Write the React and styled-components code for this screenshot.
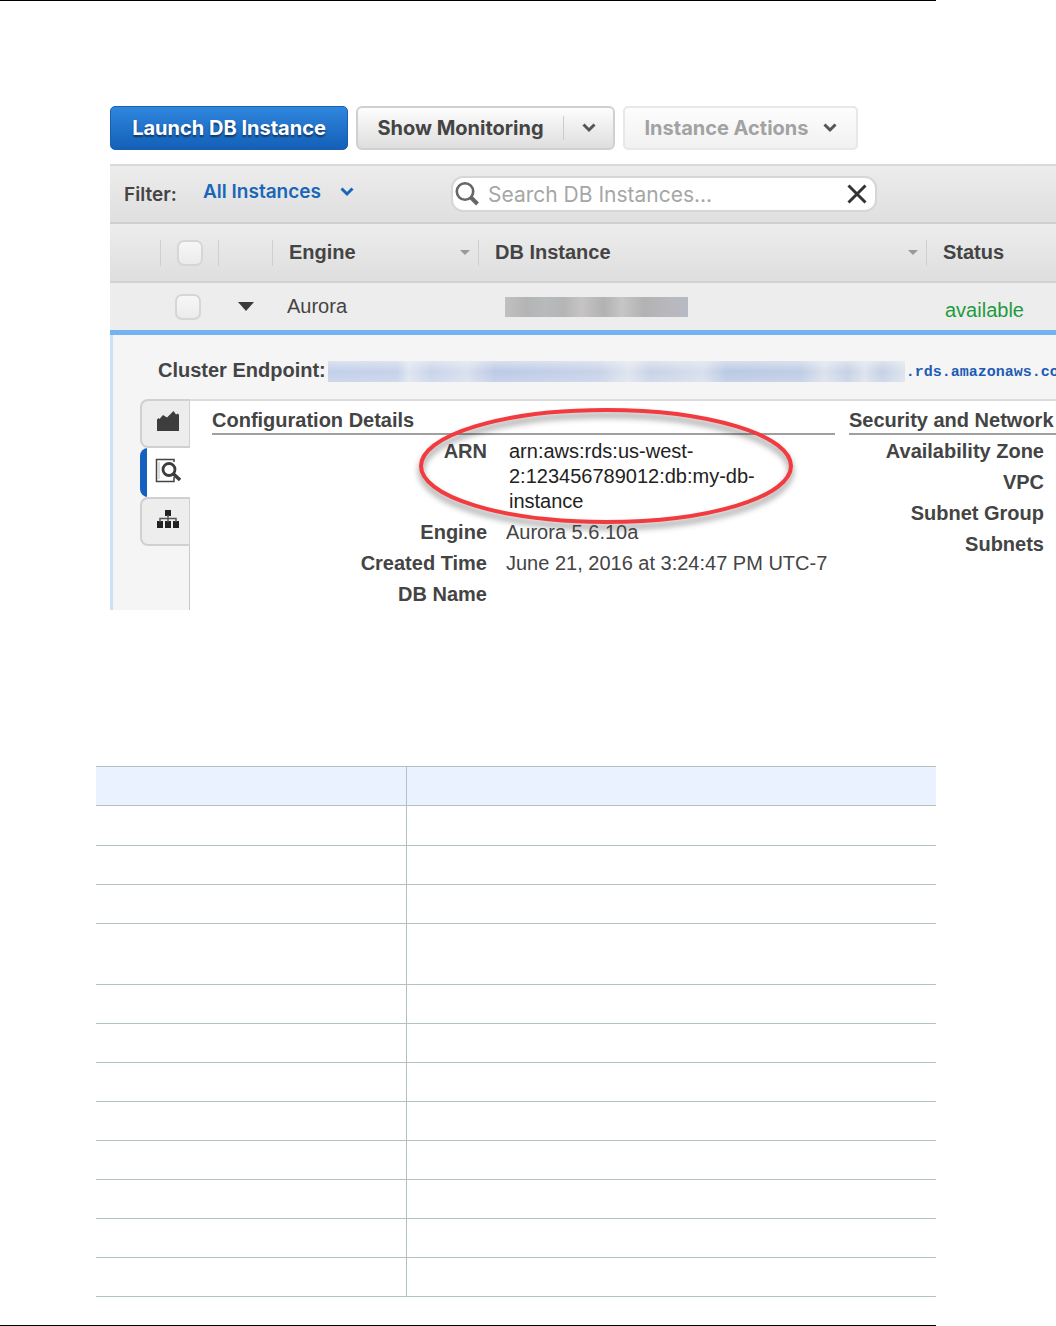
import React, { useState } from 'react';
import styled, { createGlobalStyle, css } from 'styled-components';

const rowHeights = [40, 39, 39, 61, 39, 39, 39, 39, 39, 39, 39, 39];

const configuration = [
  { label: 'ARN', value: 'arn:aws:rds:us-west-2:123456789012:db:my-db-instance', circled: true },
  { label: 'Engine', value: 'Aurora 5.6.10a' },
  { label: 'Created Time', value: 'June 21, 2016 at 3:24:47 PM UTC-7' },
  { label: 'DB Name', value: '' },
];

const network = ['Availability Zone', 'VPC', 'Subnet Group', 'Subnets'];

function Chevron({ color = '#555' }) {
  return (
    <svg width="14" height="10" viewBox="0 0 14 10" fill="none" aria-hidden="true">
      <path d="M1.5 1.5 L7 7 L12.5 1.5" stroke={color} strokeWidth="3" />
    </svg>
  );
}

function ChartIcon() {
  return (
    <svg width="22" height="20" viewBox="0 0 22 20" aria-hidden="true">
      <path d="M0 8.5 L1.5 7 L2.5 8 L6 4 L10 6.5 L16.5 0 L19 3.5 L21 2.5 L22 4 V20 H0 Z" fill="#3d3d3d" />
    </svg>
  );
}

function DetailsIcon() {
  return (
    <svg width="26" height="25" viewBox="0 0 26 25" fill="none" aria-hidden="true">
      <path d="M19 4 V1.5 H1.5 V23.5 H19 V19" stroke="#444" strokeWidth="1.5" />
      <path d="M4 4 V21" stroke="#bbb" strokeWidth="1" />
      <circle cx="14" cy="11.5" r="6" stroke="#3d3d3d" strokeWidth="2.8" />
      <path d="M18 15.5 L25 22" stroke="#3d3d3d" strokeWidth="3.4" />
    </svg>
  );
}

function SitemapIcon() {
  return (
    <svg width="22" height="18" viewBox="0 0 22 18" aria-hidden="true">
      <path d="M8 0h6v6h-6z M0 11h6v7h-6z M8 11h6v7h-6z M16 11h6v7h-6z" fill="#222" />
      <path d="M11 5 V12 M3 12 V8.5 H19 V12" stroke="#555" strokeWidth="1.5" fill="none" />
    </svg>
  );
}

const tabs = [
  { id: 'monitoring', title: 'Monitoring', Icon: ChartIcon },
  { id: 'details', title: 'Details', Icon: DetailsIcon },
  { id: 'topology', title: 'Topology', Icon: SitemapIcon },
];

function Console() {
  const [search, setSearch] = useState('');
  const [tab, setTab] = useState('details');

  return (
    <ConsoleFrame>
      <Toolbar>
        <PrimaryButton>Launch DB Instance</PrimaryButton>
        <SplitButton>
          <SplitMain>Show Monitoring</SplitMain>
          <SplitToggle aria-label="Monitoring options"><Chevron /></SplitToggle>
        </SplitButton>
        <ActionsButton disabled>
          Instance Actions
          <Chevron />
        </ActionsButton>
      </Toolbar>

      <FilterBar>
        <FilterLabel htmlFor="filter">Filter:</FilterLabel>
        <FilterPicker>
          <select id="filter">
            <option>All Instances</option>
          </select>
          <Chevron color="#1a66b8" />
        </FilterPicker>
        <SearchBox>
          <svg width="26" height="26" viewBox="0 0 26 26" fill="none" aria-hidden="true">
            <circle cx="10" cy="10.5" r="8.2" stroke="#666" strokeWidth="2.6" />
            <path d="M15.5 16 L22.5 23" stroke="#666" strokeWidth="4" />
          </svg>
          <input
            aria-label="Search DB Instances"
            placeholder="Search DB Instances..."
            value={search}
            onChange={(e) => setSearch(e.target.value)}
          />
          <button aria-label="Clear search" onClick={() => setSearch('')}>
            <svg width="20" height="20" viewBox="0 0 20 20" fill="none" aria-hidden="true">
              <path d="M1.5 1.5 L18.5 18.5 M18.5 1.5 L1.5 18.5" stroke="#333" strokeWidth="3" />
            </svg>
          </button>
        </SearchBox>
      </FilterBar>

      <InstanceTable>
        <colgroup>
          <Col $width={51} />
          <Col $width={58} />
          <Col $width={54} />
          <Col $width={206} />
          <Col />
          <Col $width={129} />
        </colgroup>
        <thead>
          <tr>
            <th><HeadCell /></th>
            <th><HeadCell><CheckBox type="checkbox" aria-label="Select all" /></HeadCell></th>
            <th><HeadCell /></th>
            <th><HeadCell>Engine<SortArrow /></HeadCell></th>
            <th><HeadCell>DB Instance<SortArrow /></HeadCell></th>
            <th><HeadCell $last>Status</HeadCell></th>
          </tr>
        </thead>
        <tbody>
          <tr>
            <td />
            <td><BodyCell><CheckBox type="checkbox" aria-label="Select instance" /></BodyCell></td>
            <td>
              <BodyCell>
                <ExpandButton aria-label="Collapse row">
                  <svg width="16" height="9" viewBox="0 0 16 9" aria-hidden="true">
                    <path d="M0 0 H16 L8 9 Z" fill="#3a3a3a" />
                  </svg>
                </ExpandButton>
              </BodyCell>
            </td>
            <td><BodyCell>Aurora</BodyCell></td>
            <td><HiddenName /></td>
            <td><Available>available</Available></td>
          </tr>
        </tbody>
      </InstanceTable>

      <Expanded>
        <Endpoint>
          <b>Cluster Endpoint:</b>
          <HiddenHost />
          <a href="#endpoint">.rds.amazonaws.co</a>
        </Endpoint>
        <DetailArea>
          <TabList>
            {tabs.map(({ id, title, Icon }) => (
              <Tab key={id} $active={tab === id} aria-label={title} onClick={() => setTab(id)}>
                <Icon />
              </Tab>
            ))}
          </TabList>
          <Panel>
            <Section $grow>
              <h3>Configuration Details</h3>
              {configuration.map((item) => (
                <Field key={item.label}>
                  <Label $width={275}>{item.label}</Label>
                  <Value $circled={item.circled}>{item.value}</Value>
                  {item.circled && (
                    <Circle viewBox="0 0 390 140" aria-hidden="true">
                      <ellipse cx="195" cy="66" rx="185" ry="56" />
                    </Circle>
                  )}
                </Field>
              ))}
            </Section>
            <Section>
              <h3>Security and Network</h3>
              {network.map((label) => (
                <Field key={label}>
                  <Label $width={195}>{label}</Label>
                </Field>
              ))}
            </Section>
          </Panel>
        </DetailArea>
      </Expanded>
    </ConsoleFrame>
  );
}

function App() {
  return (
    <Page>
      <GlobalStyle />
      <Rule />
      <Console />
      <FormatTable>
        <thead>
          <tr>
            <th />
            <th />
          </tr>
        </thead>
        <tbody>
          {rowHeights.map((height, i) => (
            <FormatRow key={i} $height={height}>
              <td />
              <td />
            </FormatRow>
          ))}
        </tbody>
      </FormatTable>
      <Rule />
    </Page>
  );
}

const GlobalStyle = createGlobalStyle`
  * {
    box-sizing: border-box;
  }

  body {
    margin: 0;
    background: #fff;
    color: #444;
    font-family: "Liberation Sans", Arial, sans-serif;
    font-size: 20px;
    line-height: 25px;
  }

  button, input, select {
    margin: 0;
    padding: 0;
    border: none;
    background: none;
    color: inherit;
    font: inherit;
  }
`

const Page = styled.main`
  overflow: hidden;
`

const Rule = styled.hr`
  height: 1px;
  margin: 0 120px 0 0;
  border: none;
  background: #000;
`

const ConsoleFrame = styled.section`
  margin: 105px 0 156px 110px;
`

const Toolbar = styled.div`
  display: flex;
  gap: 8px;
  height: 44px;
  margin-bottom: 14px;
  font-family: Inter, sans-serif;
  font-weight: 700;
`

const PrimaryButton = styled.button`
  width: 238px;
  border: 1px solid #1a60b0;
  border-radius: 5px;
  background: linear-gradient(#3086dd, #1360b8);
  color: #fff;
  text-shadow: 0 2px 2px rgba(0, 0, 0, 0.5);
`

const SplitButton = styled.div`
  display: flex;
  align-items: center;
  width: 259px;
  border: 2px solid #d0d0d0;
  border-radius: 6px;
  background: linear-gradient(#fdfdfd, #dedede);
`

const SplitMain = styled.button`
  flex: 1;
`

const SplitToggle = styled.button`
  display: flex;
  align-items: center;
  justify-content: center;
  width: 50px;
  height: 24px;
  border-left: 1px solid #ccc;
`

const ActionsButton = styled.button`
  display: flex;
  align-items: center;
  justify-content: center;
  gap: 14px;
  width: 235px;
  border: 2px solid #e8e8e8;
  border-radius: 5px;
  background: linear-gradient(#fdfdfd, #f1f1f1);
  color: #a2a2a2;
`

const FilterBar = styled.div`
  display: flex;
  align-items: center;
  height: 60px;
  padding-left: 14px;
  border-top: 2px solid #dadada;
  border-bottom: 2px solid #cfcfcf;
  background: linear-gradient(#ececec, #dfdfdf);
  font-family: Inter, sans-serif;
  font-size: 19px;
`

const FilterLabel = styled.label`
  width: 79px;
  font-weight: 600;
`

const FilterPicker = styled.div`
  display: flex;
  align-items: center;
  width: 248px;
  padding-bottom: 5px;
  color: #1a66b8;

  select {
    appearance: none;
    width: 137px;
    font-weight: 600;
  }
`

const SearchBox = styled.div`
  display: flex;
  align-items: center;
  flex: 0 1 426px;
  height: 36px;
  padding: 0 8px 0 2px;
  border: 2px solid #d6d6d6;
  border-radius: 12px;
  background: #fff;

  input {
    flex: 1;
    min-width: 0;
    padding-left: 7px;
    outline: none;
    font-size: 21px;
  }

  input::placeholder {
    color: #a6a6a6;
  }

  button {
    display: flex;
  }
`

const InstanceTable = styled.table`
  width: 100%;
  table-layout: fixed;
  border-collapse: separate;
  border-spacing: 0;

  th, td {
    padding: 0;
    text-align: left;
  }

  th {
    height: 59px;
    border-bottom: 2px solid #d2d2d2;
    background: linear-gradient(#ededed, #dedede);
  }

  td {
    height: 47px;
    background: #ededed;
  }
`

const Col = styled.col`
  ${({ $width }) => $width && css`width: ${$width}px;`}
`

const HeadCell = styled.div`
  display: flex;
  align-items: center;
  height: 26px;
  padding: 0 8px 0 16px;
  ${({ $last }) => !$last && css`
    border-right: 1px solid #cfcfcf;
    box-shadow: 1px 0 #f6f6f6;
  `}
`

const BodyCell = styled.div`
  display: flex;
  align-items: center;
  padding-left: 14px;
`

const SortArrow = styled.span`
  margin-left: auto;
  border: 5px solid transparent;
  border-top-color: #999;
  border-bottom: none;
`

const CheckBox = styled.input`
  appearance: none;
  flex: none;
  width: 26px;
  height: 26px;
  border: 2px solid #d6d6d6;
  border-radius: 7px;
  background: linear-gradient(#f7f7f7, #ebebeb);
`

const ExpandButton = styled.button`
  display: flex;
  padding-left: 5px;
`

const HiddenName = styled.div`
  width: 183px;
  height: 20px;
  margin-left: 26px;
  background: linear-gradient(90deg, #c0c0c0, #b4b4b5 12%, #b7bbbc 22%, #b5b5b6 32%, #c6c4c4 42%, #b2b2b3 54%, #c6c6c6 64%, #b2b2b4 76%, #b9b7bb 88%, #b7bac4);
`

const Available = styled.div`
  padding: 8px 0 0 18px;
  color: #1f9a3d;
`

const Expanded = styled.div`
  border-top: 5px solid #76b2f2;
  background: #f5f5f5;
`

const Endpoint = styled.div`
  display: flex;
  align-items: center;
  height: 64px;
  padding: 6px 0 0 45px;
  overflow: hidden;
  border-left: 3px solid #c9e1fa;
  white-space: nowrap;

  a {
    padding-top: 4px;
    color: #1d5bb5;
    font: bold 15px "Liberation Mono", monospace;
    text-decoration: none;
  }
`

const HiddenHost = styled.span`
  flex: none;
  width: 577px;
  height: 21px;
  margin: 2px 1px 0 2px;
  background:
    linear-gradient(rgba(245, 245, 245, 0.5), transparent 50%, rgba(245, 245, 245, 0.2)),
    linear-gradient(90deg, #c3d0ea, #c6d2e9 12%, #dfe5f0 14%, #c8d4ea 18%, #d9e0ee 24%, #bccae6 29%, #c8d3e9 47%, #dfe5ef 52%, #c8d3e8 56%, #d8dfed 65%, #bac9e4 69%, #bfcde5 82%, #dbe2ed 86%, #c6d1e6 90%, #dde3ed 93%, #c5d1e6 96%, #dde4ee);
`

const DetailArea = styled.div`
  display: flex;
  padding-left: 27px;
  border-left: 3px solid #c9e1fa;
`

const TabList = styled.div`
  display: flex;
  flex-direction: column;
  flex: none;
  width: 50px;

  &::after {
    content: "";
    flex: 1;
    border-right: 1px solid #c8c8c8;
  }
`

const Tab = styled.button`
  display: flex;
  align-items: center;
  justify-content: center;
  height: 49px;
  padding: 0 0 5px 5px;
  border: 1px solid #d0d0d0;
  border-width: 2px 1px 2px 2px;
  border-radius: 8px 0 0 8px;
  background: #ededed;
  cursor: pointer;
  ${({ $active }) => $active && css`
    border-width: 0;
    background: linear-gradient(90deg, #1660c0 7px, #fff 7px);
  `}
`

const Panel = styled.div`
  display: flex;
  flex: 1;
  gap: 14px;
  min-width: 0;
  padding-left: 22px;
  border-top: 2px solid #dcdcdc;
  background: #fff;
`

const Section = styled.div`
  flex: ${({ $grow }) => ($grow ? '1' : '0 0 207px')};

  h3 {
    height: 34px;
    margin: 0 0 1px;
    padding-top: 7px;
    border-bottom: 2px solid #a0a0a0;
    font-size: 20px;
    white-space: nowrap;
  }
`

const Field = styled.div`
  position: relative;
  display: flex;
  padding: 3px 0;
`

const Label = styled.b`
  flex: none;
  width: ${({ $width }) => $width}px;
  text-align: right;
`

const Value = styled.span`
  margin-left: 19px;
  white-space: nowrap;
  ${({ $circled }) => $circled && css`
    width: 260px;
    margin-left: 22px;
    color: #222;
    white-space: normal;
  `}
`

// hand-drawn marker over the ARN value
const Circle = styled.svg`
  position: absolute;
  top: -36px;
  left: 199px;
  width: 390px;
  height: 140px;
  fill: none;
  stroke: #f23b3e;
  stroke-width: 4px;
  filter: drop-shadow(0 5px 3px rgba(0, 0, 0, 0.45));
  pointer-events: none;
`

const FormatTable = styled.table`
  width: calc(100% - 216px);
  margin: 0 120px 28px 96px;
  table-layout: fixed;
  border-collapse: separate;
  border-spacing: 0;

  th, td {
    padding: 0;
    border-bottom: 1px solid #b2c2be;
  }

  th {
    height: 40px;
    border-top: 1px solid #b2c2be;
    background: #eaf2ff;
  }

  th:first-child, td:first-child {
    width: 311px;
    border-right: 1px solid #b2c2be;
  }
`

const FormatRow = styled.tr`
  height: ${({ $height }) => $height}px;
`

export default App
